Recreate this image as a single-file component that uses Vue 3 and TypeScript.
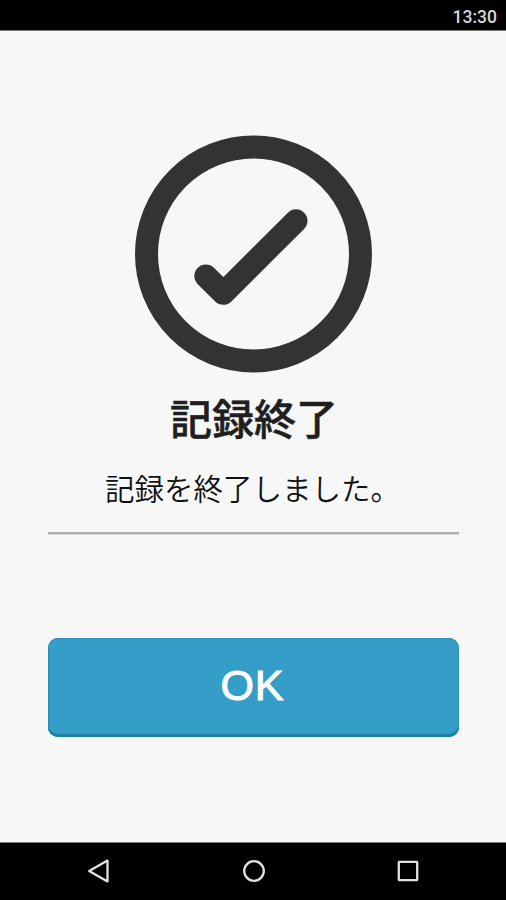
<script setup lang="ts">
const clock: string = '13:30'
const title: string = '記録終了'
const message: string = '記録を終了しました。'
</script>

<template>
  <div class="screen">
    <header class="status"><span class="clock">{{ clock }}</span></header>
    <main class="content">
      <svg class="check" viewBox="0 0 238 238" aria-hidden="true">
        <circle cx="118.5" cy="119" r="107" stroke-width="23" />
        <path d="M70.8 141 L88.3 158.3 L161 85.8" stroke-width="23" />
      </svg>
      <h1 class="title">{{ title }}</h1>
      <p class="message">{{ message }}</p>
      <hr class="rule" />
      <button class="ok" type="button"><span class="label">OK</span></button>
    </main>
    <nav class="navbar">
      <svg class="nav-icon" viewBox="0 0 24 24"><path d="M2.2 12 L20.5 1.6 V22.4 Z" /></svg>
      <svg class="nav-icon" viewBox="0 0 24 24"><circle cx="12" cy="12" r="9.8" /></svg>
      <svg class="nav-icon" viewBox="0 0 24 24"><rect x="2.8" y="2.8" width="18.4" height="18.4" rx="0.6" /></svg>
    </nav>
  </div>
</template>

<style>
body {
  margin: 0;
  background: #f7f7f7;
}
</style>

<style scoped>
.screen {
  display: flex;
  flex-direction: column;
  box-sizing: border-box;
  width: 506px;
  height: 900px;
  background: #f7f7f7;
  color: #1f1f1f;
  font-family: "Noto Sans CJK JP", sans-serif;
  overflow: hidden;
}
.status {
  display: flex;
  justify-content: flex-end;
  align-items: center;
  box-sizing: border-box;
  height: 31px;
  padding: 3px 9px 0 0;
  background: #000;
  border-bottom: 1px solid #777;
  flex: none;
}
.clock {
  color: #d8d8d8;
  font: 500 17.5px/20px Roboto, sans-serif;
}
.content {
  display: flex;
  flex-direction: column;
  align-items: center;
  flex: 1;
  padding: 104px 47px 0 48px;
}
.check {
  width: 238px;
  height: 238px;
  flex: none;
  fill: none;
  stroke: #333;
  stroke-linecap: round;
  stroke-linejoin: round;
}
.title {
  margin: 14px 0 0;
  padding-left: 1px;
  font-size: 42px;
  line-height: 60px;
  font-weight: 500;
  -webkit-text-stroke: 0.5px #1f1f1f;
}
.message {
  margin: 19px 0 0;
  padding-right: 2px;
  font-size: 29.5px;
  line-height: 42px;
  font-weight: 350;
  white-space: nowrap;
  color: #111;
}
.rule {
  box-sizing: border-box;
  width: 100%;
  height: 3px;
  margin: 24px 0 0;
  border: 0;
  border-top: 2px solid #b0b0b0;
  border-bottom: 1px solid #d6d6d6;
}
.ok {
  display: flex;
  align-items: center;
  justify-content: center;
  width: 100%;
  height: 99px;
  margin: 103px 0 0;
  padding: 0 2px 5px 0;
  border: 0;
  border-radius: 10px;
  background: #359ec8;
  box-shadow: inset 0 -3px 1px #1c7fa5, inset 0 0 1px 1px #2c8db4;
  color: #fff;
  font: 400 43px/60px "Liberation Sans", sans-serif;
  letter-spacing: 1px;
  -webkit-text-stroke: 1px #fff;
}
.navbar {
  display: flex;
  justify-content: space-between;
  align-items: center;
  box-sizing: border-box;
  height: 58px;
  padding: 0 86px 1px 87px;
  background: #000;
  border-top: 1px solid #777;
  flex: none;
}
.nav-icon {
  width: 24px;
  height: 24px;
  fill: none;
  stroke: #e2e2e2;
  stroke-width: 2.3;
  stroke-linejoin: round;
}
</style>
